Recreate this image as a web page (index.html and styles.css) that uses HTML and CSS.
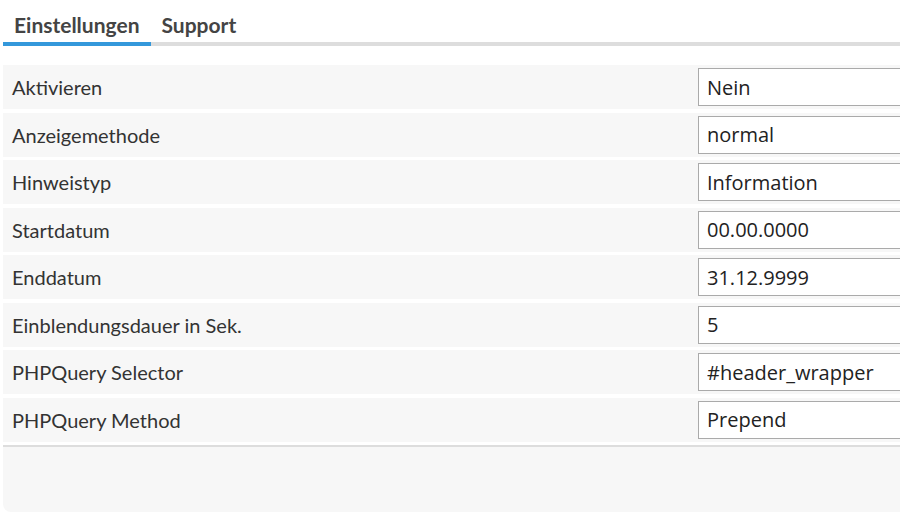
FILE: index.html
```html
<!doctype html>
<html lang="de">
<head>
  <meta charset="UTF-8">
  <title>Einstellungen</title>
  <link rel="stylesheet" href="styles.css">
</head>
<body>

<div id="panel">
  <div class="tabs">
    <a class="tab active">Einstellungen</a>
    <a class="tab">Support</a>
  </div>

  <form class="settings" action="">
    <div class="row">
      <label for="act">Aktivieren</label>
      <input type="text" id="act" value="Nein" />
    </div>
    <div class="row">
      <label for="mode">Anzeigemethode</label>
      <input type="text" id="mode" value="normal" />
    </div>
    <div class="row">
      <label for="type">Hinweistyp</label>
      <input type="text" id="type" value="Information" />
    </div>
    <div class="row">
      <label for="start">Startdatum</label>
      <input type="text" id="start" value="00.00.0000" />
    </div>
    <div class="row">
      <label for="end">Enddatum</label>
      <input type="text" id="end" value="31.12.9999" />
    </div>
    <div class="row">
      <label for="dur">Einblendungsdauer in Sek.</label>
      <input type="text" id="dur" value="5" />
    </div>
    <div class="row">
      <label for="sel">PHPQuery Selector</label>
      <input type="text" id="sel" value="#header_wrapper" />
    </div>
    <div class="row">
      <label for="meth">PHPQuery Method</label>
      <input type="text" id="meth" value="Prepend" />
    </div>
  </form>

  <div class="footer"></div>
</div>

</body>
</html>
```

FILE: styles.css
```css
body {
  margin: 0;
  background: #fff;
  font-family: 'Lato', 'Liberation Sans', sans-serif;
  color: #333;
  overflow: hidden;
}

#panel {
  width: 980px;
  padding-left: 3px;
}

.tabs {
  display: flex;
  padding-top: 13px;
  border-bottom: 4px solid #ddd;
}

.tab {
  font-size: 21px;
  font-weight: bold;
  line-height: 24px;
  color: #444;
  padding: 0 11px 5px;
  margin-bottom: -4px;
  border-bottom: 4px solid transparent;
}

.tab.active {
  border-bottom-color: #3498db;
}

.settings {
  display: grid;
  grid-auto-rows: 44px;
  row-gap: 3.5px;
  margin: 19px 0 0;
}

.row {
  display: flex;
  align-items: center;
  background: #f7f7f7;
}

label {
  width: 686px;
  padding-left: 9px;
  font-size: 20px;
}

input {
  font-family: 'Open Sans', sans-serif;
  font-size: 20px;
  color: #222;
  width: 260px;
  height: 38px;
  box-sizing: border-box;
  padding: 0 8px;
  border: 1px solid #aaa;
  background: #fff;
}

.footer {
  height: 65px;
  margin-top: 3.5px;
  border-top: 2px solid #ddd;
  background: #f7f7f7;
  border-radius: 0 0 8px 8px;
}
```
